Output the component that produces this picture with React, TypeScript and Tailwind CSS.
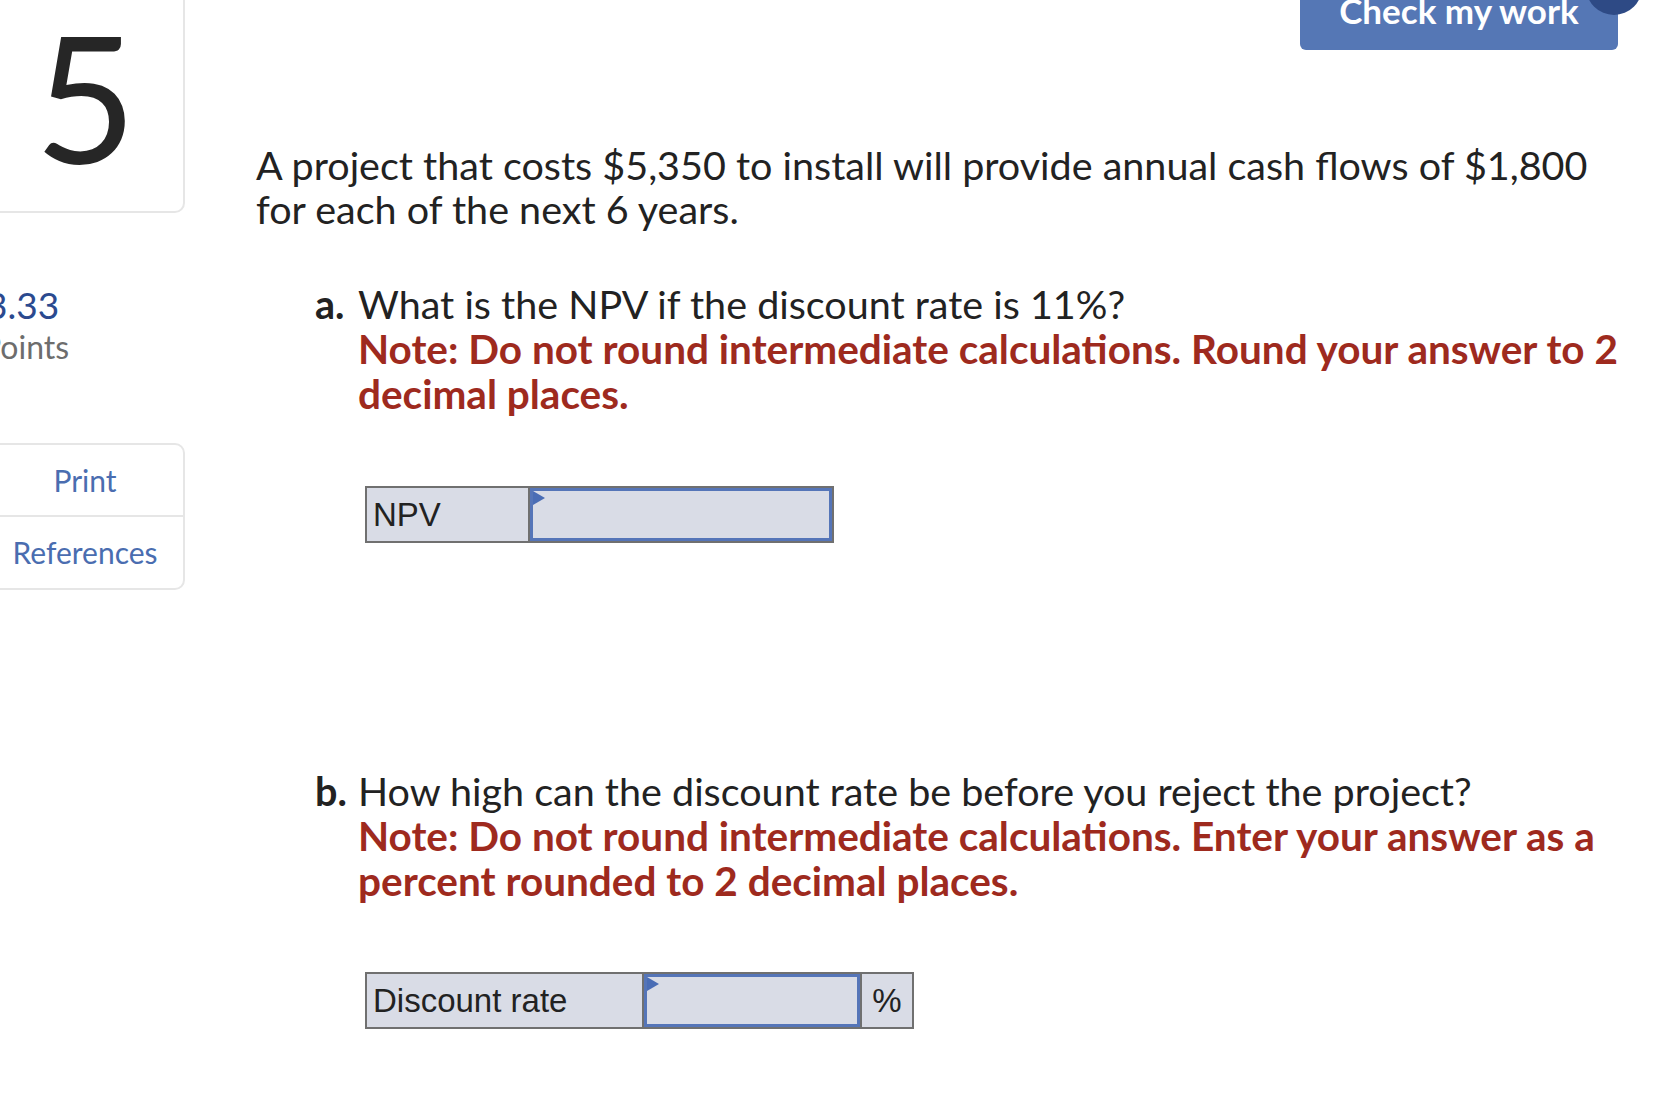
import React from 'react';

const body = { fontFamily: 'Lato, "Open Sans", sans-serif' };
const arial = { fontFamily: '"Liberation Sans", Arial, sans-serif' };

// Small blue flag that sits in the top-left corner of an answer box
const Flag: React.FC = () => (
  <svg className="absolute left-0 top-0" width="12" height="14" viewBox="0 0 12 14">
    <polygon points="0,0 12,7 0,14" fill="#4a6db5" />
  </svg>
);

const AnswerInput: React.FC<{ width: string }> = ({ width }) => (
  <div className={`relative h-full ${width} border-[3px] border-[#5575b8] bg-[#d9dce6]`}>
    <Flag />
  </div>
);

const App: React.FC = () => {
  return (
    <div className="flex w-[1670px] h-[1113px] overflow-hidden bg-white text-[#222]" style={body}>
      {/* Left rail */}
      <div className="w-[185px] shrink-0 flex flex-col">
        <div className="-ml-[12px] h-[213px] rounded-br-[10px] border-r-2 border-b-2 border-[#e6e6e6] flex justify-center items-start pt-[8px]">
          <span className="text-[176px] leading-none font-normal text-[#262626]">5</span>
        </div>
        <div className="-ml-[14px] mt-[70px] flex flex-col">
          <span className="text-[37px] leading-[44px] text-[#2b4a8f]">3.33</span>
          <span className="-ml-[4px] text-[32px] leading-[40px] text-[#6d6d6d]">Points</span>
        </div>
        <div className="-ml-[15px] mt-[76px] w-[200px] rounded-r-[10px] border-2 border-[#e6e6e6] flex flex-col text-[#4a6db0] text-[30px]">
          <div className="h-[72px] flex items-center justify-center border-b-2 border-[#e6e6e6]">Print</div>
          <div className="h-[71px] flex items-center justify-center">References</div>
        </div>
      </div>

      {/* Main */}
      <div className="flex-1 flex flex-col pl-[71px] pr-[53px]">
        <div className="flex justify-end">
          <div className="relative -mt-[24px] w-[318px] h-[74px] rounded-[6px] bg-[#5577b5] flex items-center justify-center">
            <span className="text-white font-bold text-[35px] leading-none -mt-[6px]">Check my work</span>
            <span className="absolute -right-[24px] -top-[17px] w-[56px] h-[56px] rounded-full bg-[#2e4a85]" />
          </div>
        </div>

        <p className="mt-[93px] text-[39.5px] leading-[44px] text-[#222] whitespace-nowrap">
          A project that costs $5,350 to install will provide annual cash flows of $1,800
          <br />
          for each of the next 6 years.
        </p>

        {/* Part a */}
        <div className="mt-[50px] ml-[59px] flex text-[39.5px] leading-[45px] whitespace-nowrap">
          <span className="w-[43px] shrink-0 font-bold">a.</span>
          <div>
            <div>What is the NPV if the discount rate is 11%?</div>
            <div className="font-bold text-[40.5px] text-[#9e2a1e]">
              Note: Do not round intermediate calculations. Round your answer to 2
              <br />
              decimal places.
            </div>
          </div>
        </div>

        <div className="mt-[70px] ml-[109px] flex h-[57px] w-fit border-2 border-[#707070] bg-[#d9dce6]" style={arial}>
          <div className="w-[163px] border-r-2 border-[#707070] flex items-center pl-[6px] text-[33px]">NPV</div>
          <AnswerInput width="w-[302px]" />
        </div>

        {/* Part b */}
        <div className="mt-[225px] ml-[59px] flex text-[39.5px] leading-[45px] whitespace-nowrap">
          <span className="w-[43px] shrink-0 font-bold">b.</span>
          <div>
            <div>How high can the discount rate be before you reject the project?</div>
            <div className="font-bold text-[40.5px] text-[#9e2a1e]">
              Note: Do not round intermediate calculations. Enter your answer as a
              <br />
              percent rounded to 2 decimal places.
            </div>
          </div>
        </div>

        <div className="mt-[69px] ml-[109px] flex h-[57px] w-fit border-2 border-[#707070] bg-[#d9dce6]" style={arial}>
          <div className="w-[277px] border-r-2 border-[#707070] flex items-center pl-[6px] text-[33px]">Discount rate</div>
          <AnswerInput width="w-[216px]" />
          <div className="w-[52px] border-l-2 border-[#707070] flex items-center justify-center text-[33px]">%</div>
        </div>
      </div>
    </div>
  );
};

export default App;
